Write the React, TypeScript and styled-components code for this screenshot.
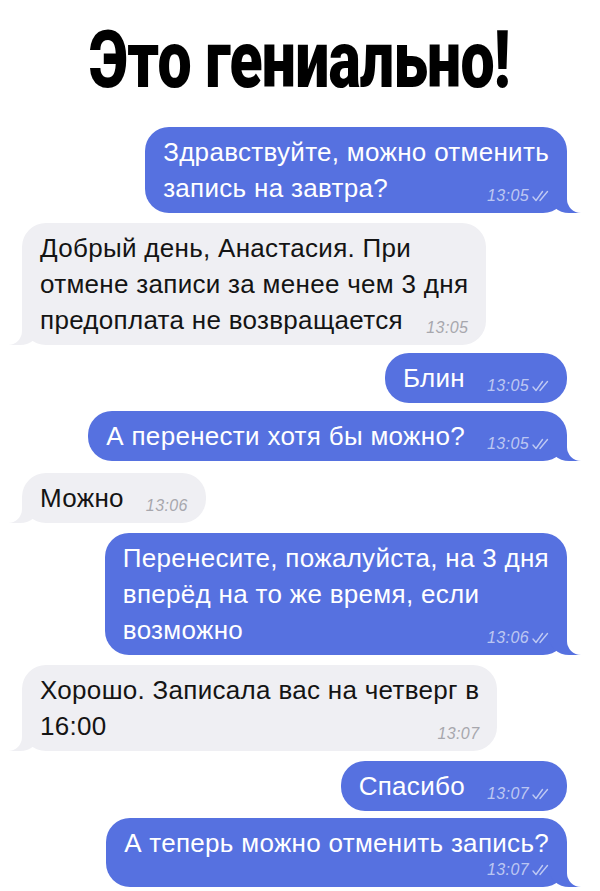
import React from "react";
import styled, { createGlobalStyle, css } from "styled-components";

const BLUE = "#5671e0";
const GRAY = "#efeff3";

const GlobalStyle = createGlobalStyle`
  html, body {
    margin: 0;
    padding: 0;
    background: #fff;
  }
  body {
    font-family: "Liberation Sans", Arial, sans-serif;
    -webkit-font-smoothing: antialiased;
  }
`;

const Page = styled.div`
  width: 600px;
  min-height: 891px;
  background: #fff;
`;

const Header = styled.header`
  height: 127px;
  display: flex;
  align-items: flex-start;
  justify-content: center;
  overflow: hidden;
`;

const Title = styled.h1`
  margin: 14px 0 0;
  display: inline-block;
  font-family: Roboto, "Liberation Sans", sans-serif;
  font-weight: 900;
  font-size: 80px;
  line-height: 92px;
  letter-spacing: -1px;
  color: #000;
  transform: scaleX(0.76);
  white-space: nowrap;
`;

const Thread = styled.div`
  display: flex;
  flex-direction: column;
  padding: 0 33px 0 22px;
`;

const Row = styled.div<{ $out: boolean; $space: number }>`
  display: flex;
  justify-content: ${({ $out }) => ($out ? "flex-end" : "flex-start")};
  margin-top: ${({ $space }) => $space}px;
`;

const tailOut = css`
  &::before {
    content: "";
    position: absolute;
    z-index: -1;
    right: -14px;
    bottom: 0;
    width: 32px;
    height: 26px;
    background: ${BLUE};
    border-bottom-left-radius: 20px 18px;
  }
  &::after {
    content: "";
    position: absolute;
    z-index: -1;
    right: -40px;
    bottom: 0;
    width: 40px;
    height: 28px;
    background: #fff;
    border-bottom-left-radius: 14px;
  }
`;

const tailIn = css`
  &::before {
    content: "";
    position: absolute;
    z-index: -1;
    left: -14px;
    bottom: 0;
    width: 32px;
    height: 26px;
    background: ${GRAY};
    border-bottom-right-radius: 20px 18px;
  }
  &::after {
    content: "";
    position: absolute;
    z-index: -1;
    left: -40px;
    bottom: 0;
    width: 40px;
    height: 28px;
    background: #fff;
    border-bottom-right-radius: 14px;
  }
`;

const Bubble = styled.div<{ $out: boolean; $tail: boolean }>`
  position: relative;
  z-index: 0;
  display: flex;
  flex-direction: column;
  padding: 7px 18px;
  border-radius: 24px;
  background: ${({ $out }) => ($out ? BLUE : GRAY)};
  color: ${({ $out }) => ($out ? "#fff" : "#141414")};
  font-size: 26px;
  letter-spacing: 0.3px;
  line-height: 36px;
  white-space: nowrap;
  ${({ $tail, $out }) => ($tail ? ($out ? tailOut : tailIn) : "")}
`;

const LastLine = styled.div`
  display: flex;
  justify-content: space-between;
  gap: 22px;
`;

const Stamp = styled.span<{ $out: boolean }>`
  align-self: flex-end;
  display: inline-flex;
  align-items: center;
  gap: 3px;
  margin-bottom: 1px;
  font-style: italic;
  font-size: 16px;
  line-height: 18px;
  letter-spacing: 0.4px;
  color: ${({ $out }) => ($out ? "rgba(255,255,255,0.62)" : "#a7a7ad")};
`;

function Checks() {
  return (
    <svg width="17" height="12" viewBox="0 0 17 12" fill="none">
      <path d="M1 7 L4 10.5 L10.5 1.5" stroke="currentColor" strokeWidth="1.4" strokeLinecap="round" strokeLinejoin="round" />
      <path d="M8 10.5 L15.5 1.5" stroke="currentColor" strokeWidth="1.4" strokeLinecap="round" />
    </svg>
  );
}

type Message = {
  out: boolean;
  lines: string[];
  time: string;
  tail: boolean;
  space: number;
};

const messages: Message[] = [
  { out: true, lines: ["Здравствуйте, можно отменить", "запись на завтра?"], time: "13:05", tail: true, space: 0 },
  {
    out: false,
    lines: ["Добрый день, Анастасия. При", "отмене записи за менее чем 3 дня", "предоплата не возвращается"],
    time: "13:05",
    tail: true,
    space: 10,
  },
  { out: true, lines: ["Блин"], time: "13:05", tail: false, space: 8 },
  { out: true, lines: ["А перенести хотя бы можно?"], time: "13:05", tail: true, space: 8 },
  { out: false, lines: ["Можно"], time: "13:06", tail: true, space: 12 },
  {
    out: true,
    lines: ["Перенесите, пожалуйста, на 3 дня", "вперёд на то же время, если", "возможно"],
    time: "13:06",
    tail: true,
    space: 10,
  },
  { out: false, lines: ["Хорошо. Записала вас на четверг в", "16:00"], time: "13:07", tail: true, space: 10 },
  { out: true, lines: ["Спасибо"], time: "13:07", tail: false, space: 10 },
  { out: true, lines: ["А теперь можно отменить запись?", ""], time: "13:07", tail: true, space: 7 },
];

const EmptyLine = styled.div`
  line-height: 18px;
  height: 18px;
`;

function ChatBubble({ msg }: { msg: Message }) {
  const head = msg.lines.slice(0, -1);
  const last = msg.lines[msg.lines.length - 1];

  return (
    <Row $out={msg.out} $space={msg.space}>
      <Bubble $out={msg.out} $tail={msg.tail}>
        {head.map((line, i) => (
          <div key={i}>{line}</div>
        ))}
        <LastLine>
          {last ? <span>{last}</span> : <EmptyLine />}
          <Stamp $out={msg.out}>
            {msg.time}
            {msg.out && <Checks />}
          </Stamp>
        </LastLine>
      </Bubble>
    </Row>
  );
}

export default function App() {
  return (
    <Page>
      <GlobalStyle />
      <Header>
        <Title>Это гениально!</Title>
      </Header>
      <Thread>
        {messages.map((m, i) => (
          <ChatBubble key={i} msg={m} />
        ))}
      </Thread>
    </Page>
  );
}
